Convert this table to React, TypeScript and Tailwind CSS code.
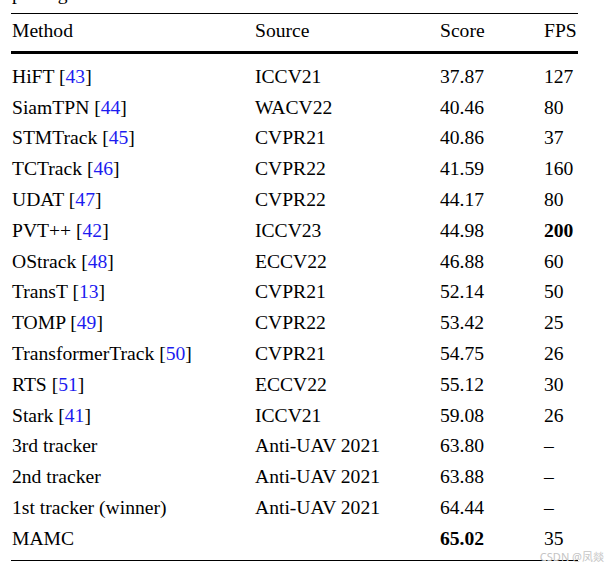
import * as React from "react"

type Row = {
  method: string
  cite?: string
  source: string
  score: string
  fps: string
  boldScore?: boolean
  boldFps?: boolean
}

const rows: Row[] = [
  { method: "HiFT", cite: "43", source: "ICCV21", score: "37.87", fps: "127" },
  { method: "SiamTPN", cite: "44", source: "WACV22", score: "40.46", fps: "80" },
  { method: "STMTrack", cite: "45", source: "CVPR21", score: "40.86", fps: "37" },
  { method: "TCTrack", cite: "46", source: "CVPR22", score: "41.59", fps: "160" },
  { method: "UDAT", cite: "47", source: "CVPR22", score: "44.17", fps: "80" },
  { method: "PVT++", cite: "42", source: "ICCV23", score: "44.98", fps: "200", boldFps: true },
  { method: "OStrack", cite: "48", source: "ECCV22", score: "46.88", fps: "60" },
  { method: "TransT", cite: "13", source: "CVPR21", score: "52.14", fps: "50" },
  { method: "TOMP", cite: "49", source: "CVPR22", score: "53.42", fps: "25" },
  { method: "TransformerTrack", cite: "50", source: "CVPR21", score: "54.75", fps: "26" },
  { method: "RTS", cite: "51", source: "ECCV22", score: "55.12", fps: "30" },
  { method: "Stark", cite: "41", source: "ICCV21", score: "59.08", fps: "26" },
  { method: "3rd tracker", source: "Anti-UAV 2021", score: "63.80", fps: "–" },
  { method: "2nd tracker", source: "Anti-UAV 2021", score: "63.88", fps: "–" },
  { method: "1st tracker (winner)", source: "Anti-UAV 2021", score: "64.44", fps: "–" },
  { method: "MAMC", source: "", score: "65.02", fps: "35", boldScore: true },
]

const cols = "grid grid-cols-[243px_185px_104px_1fr] items-center"

export default function App() {
  return (
    <div
      className="relative h-[566px] w-[610px] overflow-hidden bg-white text-[19.6px] leading-[20px] text-black"
      style={{ fontFamily: '"Liberation Serif", "Times New Roman", serif' }}
    >
      <div className="ml-[11px] w-[567px]">
        {/* tail of the caption above, cut off by the crop */}
        <div className="h-[13px] overflow-hidden">
          <div className="-mt-[16.5px] pl-[1px]">pairing</div>
        </div>
        <div className="h-px bg-black" />

        <div className={`${cols} h-[37px] pl-[1px] pb-[4px]`}>
          <div>Method</div>
          <div>Source</div>
          <div>Score</div>
          <div>FPS</div>
        </div>
        <div className="h-[3px] bg-black" />

        <div className="pb-[6px] pt-[7.5px]">
          {rows.map((r) => (
            <div key={r.method} className={`${cols} h-[30.8px] pl-[1px]`}>
              <div className="whitespace-nowrap">
                {r.method}
                {r.cite && (
                  <>
                    {" "}[<span className="text-[#1c1cf0]">{r.cite}</span>]
                  </>
                )}
              </div>
              <div className="whitespace-nowrap">{r.source}</div>
              <div className={r.boldScore ? "font-bold" : ""}>{r.score}</div>
              <div className={r.boldFps ? "font-bold" : ""}>{r.fps}</div>
            </div>
          ))}
        </div>
        <div className="h-px bg-black" />
      </div>

      <div
        className="absolute right-[6px] top-[551px] text-[11px] leading-[11px] text-[#c4c4c4]"
        style={{ fontFamily: '"Noto Sans", "Noto Sans CJK SC", sans-serif' }}
      >
        CSDN @凤燚
      </div>
    </div>
  )
}
